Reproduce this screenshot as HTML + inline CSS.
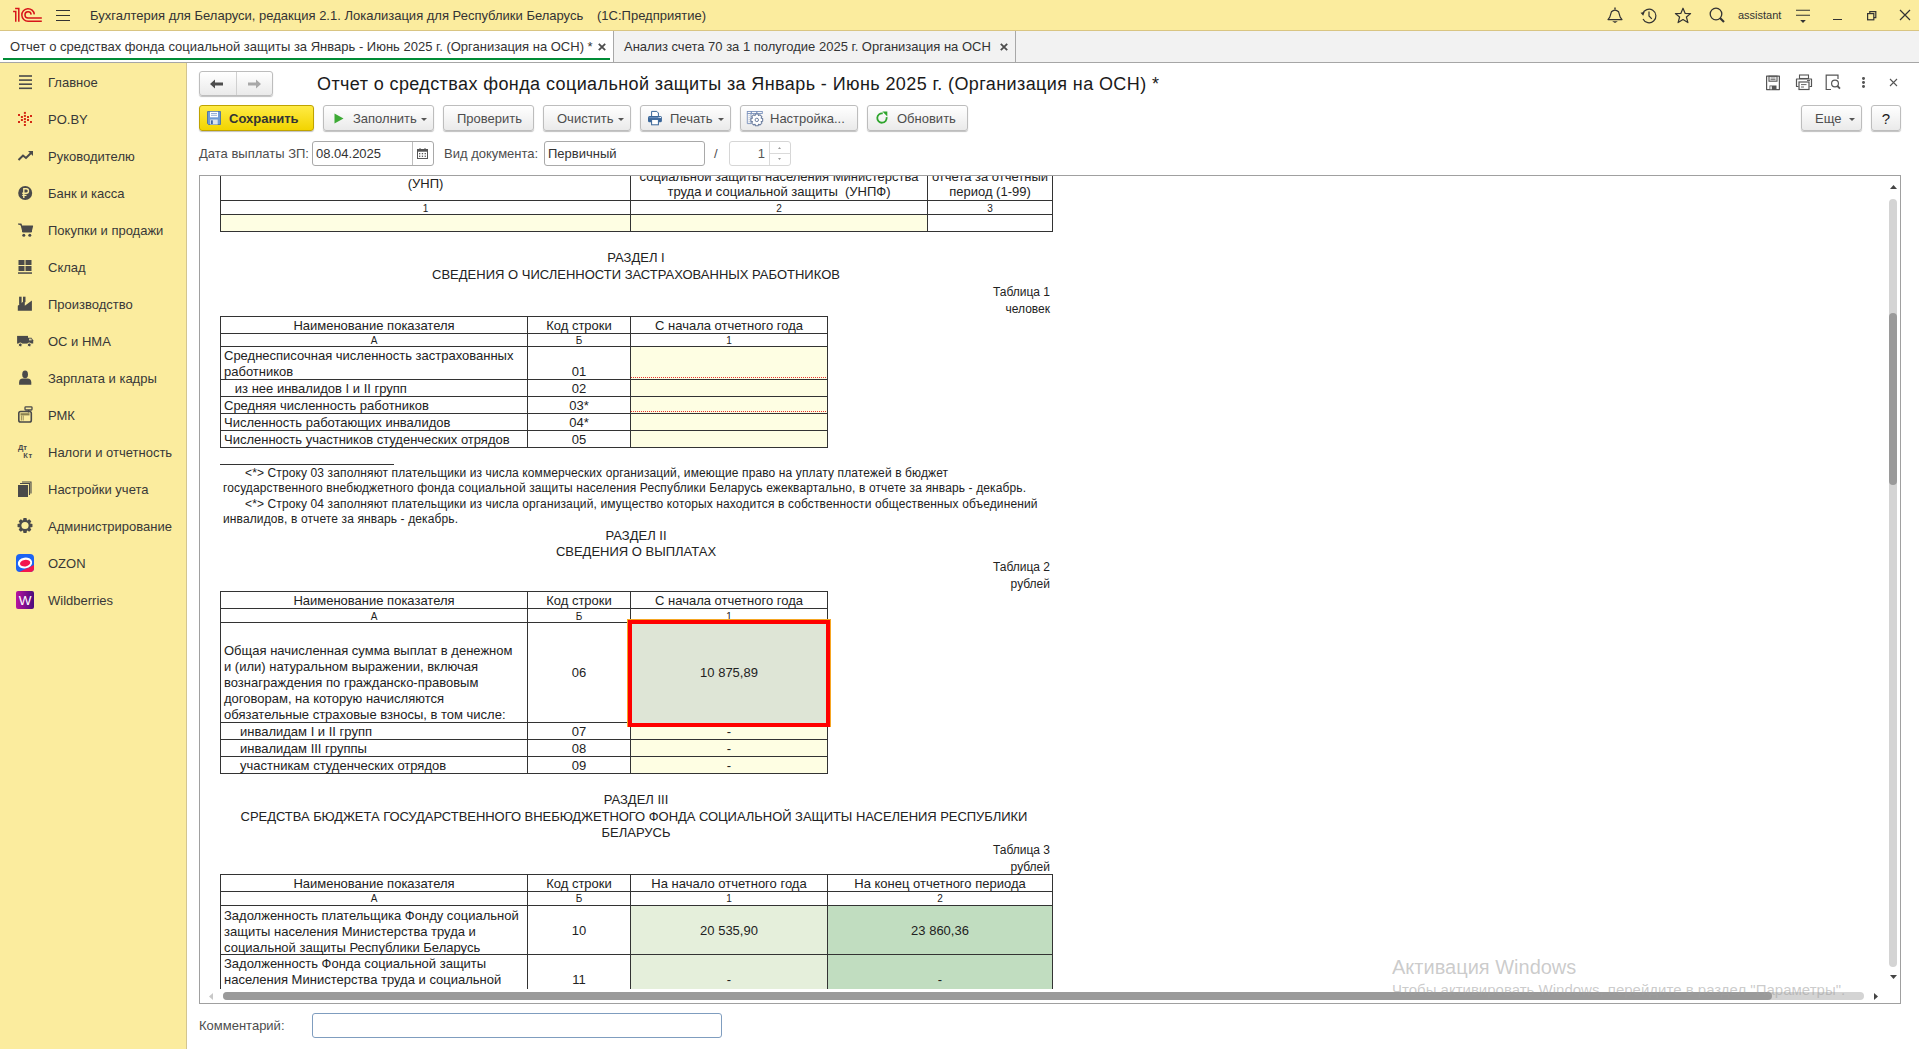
<!DOCTYPE html>
<html><head><meta charset="utf-8">
<style>
html,body{margin:0;padding:0;width:1919px;height:1049px;overflow:hidden;background:#fff;font-family:'Liberation Sans',sans-serif;}
.a{position:absolute;}
.t{position:absolute;white-space:nowrap;}
svg{position:absolute;overflow:visible;}
.btn{position:absolute;box-sizing:border-box;height:26px;border:1px solid #bdbdbd;border-radius:3px;background:linear-gradient(#ffffff,#eaeaea);box-shadow:0 1px 1px rgba(0,0,0,0.25);}
.inp{position:absolute;box-sizing:border-box;border:1px solid #bdbdbd;border-radius:3px;background:#fff;}
</style></head><body>

<div class="a" style="left:0px;top:0px;width:1919px;height:30px;background:#FBEC9E"></div>
<div class="a" style="left:0px;top:30px;width:1919px;height:1px;background:#D9C582"></div>
<svg style="left:10px;top:4px" width="36" height="22" viewBox="0 0 36 22">
<g fill="none" stroke="#D7141A" stroke-width="1.5">
<path d="M3.1 7.6 H5.75 V17.8"/>
<path d="M5.1 4.6 H8.8 V17.8"/>
<path d="M24.3 10.3 A6.25 6.25 0 1 0 18.1 17.2 H31.8"/>
<path d="M21.15 10.6 A3.1 3.1 0 1 0 18 14 H31.8"/>
</g></svg>
<div class="a" style="left:56px;top:10px;width:14px;height:1.4px;background:#333"></div>
<div class="a" style="left:56px;top:15px;width:14px;height:1.4px;background:#333"></div>
<div class="a" style="left:56px;top:20px;width:14px;height:1.4px;background:#333"></div>
<div class="t" style="left:90px;top:8px;font-size:13px;line-height:15px;color:#333;">Бухгалтерия для Беларуси, редакция 2.1. Локализация для Республики Беларусь</div>
<div class="t" style="left:597px;top:8px;font-size:13px;line-height:15px;color:#333;">(1С:Предприятие)</div>
<svg style="left:1606px;top:7px" width="18" height="18" viewBox="0 0 18 18">
<path d="M2 12.6 H16 L14.2 10.2 L12.6 4.8 Q9 1.4 5.4 4.8 L3.8 10.2 Z" fill="none" stroke="#333" stroke-width="1.2" stroke-linejoin="round"/>
<path d="M9 0.6 L9 2.4" stroke="#333" stroke-width="1.4"/>
<path d="M6.2 14.2 H11.8 L9 16 Z" fill="#333"/>
</svg>
<svg style="left:1640px;top:7px" width="18" height="18" viewBox="0 0 18 18">
<path d="M2.6 7 A6.8 6.8 0 1 1 3 12" fill="none" stroke="#333" stroke-width="1.2"/>
<path d="M0.5 5.8 L4.6 5 L3.2 8.8 Z" fill="#333"/>
<path d="M9 4.5 L9 9 L11.8 11.8" fill="none" stroke="#333" stroke-width="1.2"/>
</svg>
<svg style="left:1674px;top:7px" width="18" height="18" viewBox="0 0 18 18">
<path d="M9 1.2 L11.2 6.4 L16.6 6.6 L12.4 10 L13.9 15.6 L9 12.5 L4.1 15.6 L5.6 10 L1.4 6.6 L6.8 6.4 Z" fill="none" stroke="#333" stroke-width="1.2" stroke-linejoin="round"/>
</svg>
<svg style="left:1709px;top:7px" width="18" height="18" viewBox="0 0 18 18">
<circle cx="7" cy="7" r="5.8" fill="none" stroke="#333" stroke-width="1.3"/>
<path d="M11 11 L15 15" stroke="#333" stroke-width="2.2"/>
</svg>
<div class="t" style="left:1738px;top:8px;font-size:11px;line-height:15px;color:#333;">assistant</div>
<svg style="left:1796px;top:8px" width="16" height="16" viewBox="0 0 16 16">
<path d="M0 2.3 H14 M0 7.3 H14" stroke="#333" stroke-width="1.1"/>
<path d="M4.2 12 L9.8 12 L7 15 Z" fill="#333"/>
</svg>
<div class="a" style="left:1833px;top:18.5px;width:9px;height:1.4px;background:#333"></div>
<svg style="left:1866px;top:10px" width="12" height="12" viewBox="0 0 12 12">
<rect x="1.6" y="3.6" width="6.2" height="6.2" fill="none" stroke="#333" stroke-width="1.2"/>
<path d="M3.8 3.6 V1.6 H9.8 V7.6 H7.8" fill="none" stroke="#333" stroke-width="1.2"/>
</svg>
<svg style="left:1899px;top:9px" width="12" height="12" viewBox="0 0 12 12">
<path d="M1 1 L11 11 M11 1 L1 11" stroke="#333" stroke-width="1.2"/>
</svg>
<div class="a" style="left:0px;top:31px;width:1919px;height:31px;background:#F2F2F2"></div>
<div class="a" style="left:0px;top:31px;width:613px;height:31px;background:#FFFFFF"></div>
<div class="a" style="left:3px;top:58px;width:607px;height:2px;background:#008C36"></div>
<div class="a" style="left:613px;top:31px;width:1px;height:31px;background:#A8A8A8"></div>
<div class="a" style="left:1015px;top:31px;width:1px;height:31px;background:#A8A8A8"></div>
<div class="a" style="left:0px;top:62px;width:1919px;height:1px;background:#A6A6A6"></div>
<div class="t" style="left:10px;top:39px;font-size:13px;line-height:15px;color:#333;">Отчет о средствах фонда социальной защиты за Январь - Июнь 2025 г. (Организация на ОСН) *</div>
<div class="t" style="left:624px;top:39px;font-size:13px;line-height:15px;color:#333;">Анализ счета 70 за 1 полугодие 2025 г. Организация на ОСН</div>
<svg style="left:597.5px;top:43px" width="8" height="8" viewBox="0 0 8 8"><path d="M0.8 0.8 L7.2 7.2 M7.2 0.8 L0.8 7.2" stroke="#4d4d4d" stroke-width="1.8"/></svg>
<svg style="left:999.5px;top:43px" width="8" height="8" viewBox="0 0 8 8"><path d="M0.8 0.8 L7.2 7.2 M7.2 0.8 L0.8 7.2" stroke="#4d4d4d" stroke-width="1.8"/></svg>
<div class="a" style="left:0px;top:63px;width:186px;height:986px;background:#FBEC9E"></div>
<div class="a" style="left:186px;top:63px;width:1px;height:986px;background:#D3C590"></div>
<div class="t" style="left:48px;top:75px;font-size:13px;line-height:15px;color:#383838;">Главное</div>
<div class="t" style="left:48px;top:112px;font-size:13px;line-height:15px;color:#383838;">PO.BY</div>
<div class="t" style="left:48px;top:149px;font-size:13px;line-height:15px;color:#383838;">Руководителю</div>
<div class="t" style="left:48px;top:186px;font-size:13px;line-height:15px;color:#383838;">Банк и касса</div>
<div class="t" style="left:48px;top:223px;font-size:13px;line-height:15px;color:#383838;">Покупки и продажи</div>
<div class="t" style="left:48px;top:260px;font-size:13px;line-height:15px;color:#383838;">Склад</div>
<div class="t" style="left:48px;top:297px;font-size:13px;line-height:15px;color:#383838;">Производство</div>
<div class="t" style="left:48px;top:334px;font-size:13px;line-height:15px;color:#383838;">ОС и НМА</div>
<div class="t" style="left:48px;top:371px;font-size:13px;line-height:15px;color:#383838;">Зарплата и кадры</div>
<div class="t" style="left:48px;top:408px;font-size:13px;line-height:15px;color:#383838;">РМК</div>
<div class="t" style="left:48px;top:445px;font-size:13px;line-height:15px;color:#383838;">Налоги и отчетность</div>
<div class="t" style="left:48px;top:482px;font-size:13px;line-height:15px;color:#383838;">Настройки учета</div>
<div class="t" style="left:48px;top:519px;font-size:13px;line-height:15px;color:#383838;">Администрирование</div>
<div class="t" style="left:48px;top:556px;font-size:13px;line-height:15px;color:#383838;">OZON</div>
<div class="t" style="left:48px;top:593px;font-size:13px;line-height:15px;color:#383838;">Wildberries</div>
<svg style="left:17px;top:73px" width="18" height="18" viewBox="0 0 18 18"><rect x="2" y="2.2" width="13" height="1.6" fill="#4a4a4a"/><rect x="2" y="6.3" width="13" height="1.6" fill="#4a4a4a"/><rect x="2" y="10.4" width="13" height="1.6" fill="#4a4a4a"/><rect x="2" y="14.5" width="13" height="1.6" fill="#4a4a4a"/></svg>
<svg style="left:17px;top:110px" width="18" height="18" viewBox="0 0 18 18"><rect x="6.9" y="1.9" width="2" height="2" fill="#D42A14"/><rect x="6.9" y="4.9" width="2" height="2" fill="#D42A14"/><rect x="6.9" y="8" width="2" height="2" fill="#D42A14"/><rect x="6.9" y="10.9" width="2" height="2" fill="#D42A14"/><rect x="6.9" y="14" width="2" height="2" fill="#D42A14"/><rect x="1" y="4" width="2" height="2" fill="#D42A14"/><rect x="1" y="11" width="2" height="2" fill="#D42A14"/><rect x="3.9" y="6" width="2" height="2" fill="#D42A14"/><rect x="3.9" y="9" width="2" height="2" fill="#D42A14"/><rect x="10" y="6" width="2" height="2" fill="#D42A14"/><rect x="10" y="9" width="2" height="2" fill="#D42A14"/><rect x="13" y="5" width="2" height="2" fill="#D42A14"/><rect x="13" y="11" width="2" height="2" fill="#D42A14"/></svg>
<svg style="left:17px;top:147px" width="18" height="18" viewBox="0 0 18 18"><path d="M1.5 13 L6 8.5 L9 11 L14.5 5.5" fill="none" stroke="#4a4a4a" stroke-width="2"/><path d="M11 4 L16 4 L16 9 Z" fill="#4a4a4a"/></svg>
<svg style="left:17px;top:184px" width="18" height="18" viewBox="0 0 18 18"><circle cx="8.2" cy="9" r="7" fill="#4a4a4a"/><path d="M6.8 14 V4.8 H9.3 A2.2 2.2 0 0 1 9.3 9.2 H5.2 M5.2 11.4 H9.5" fill="none" stroke="#FBEC9E" stroke-width="1.4"/></svg>
<svg style="left:17px;top:221px" width="18" height="18" viewBox="0 0 18 18"><path d="M1 3 H4 L6 11 H14 L15.5 5 H4.8" fill="#4a4a4a" stroke="#4a4a4a" stroke-width="1.2" stroke-linejoin="round"/><rect x="5" y="5" width="10" height="6" fill="#4a4a4a"/><circle cx="6.8" cy="14.2" r="1.5" fill="#4a4a4a"/><circle cx="12.8" cy="14.2" r="1.5" fill="#4a4a4a"/></svg>
<svg style="left:17px;top:258px" width="18" height="18" viewBox="0 0 18 18"><rect x="1.5" y="2" width="6" height="5" fill="#4a4a4a"/><rect x="8.5" y="2" width="6" height="5" fill="#4a4a4a"/><rect x="1.5" y="8" width="6" height="5" fill="#4a4a4a"/><rect x="8.5" y="8" width="6" height="5" fill="#4a4a4a"/><rect x="1" y="14.3" width="14" height="1.5" fill="#4a4a4a"/></svg>
<svg style="left:17px;top:295px" width="18" height="18" viewBox="0 0 18 18"><path d="M0.8 15.8 V10.7 L7.8 5.6 V10.7 L14.9 5.6 V15.8 Z" fill="#4a4a4a"/><rect x="2.1" y="1.7" width="2.5" height="8" fill="#4a4a4a"/><rect x="6" y="1.7" width="2.5" height="5.5" fill="#4a4a4a"/></svg>
<svg style="left:17px;top:332px" width="18" height="18" viewBox="0 0 18 18"><rect x="0.1" y="3.9" width="10.9" height="7.7" fill="#4a4a4a"/><path d="M11 5.8 H14.5 L16.2 8.2 V11.6 H11 Z" fill="#4a4a4a"/><rect x="12" y="6.6" width="2.6" height="1.8" fill="#D8CFA0"/><circle cx="3.3" cy="12.9" r="1.9" fill="#4a4a4a" stroke="#FBEC9E" stroke-width="1"/><circle cx="12.3" cy="12.9" r="1.9" fill="#4a4a4a" stroke="#FBEC9E" stroke-width="1"/></svg>
<svg style="left:17px;top:369px" width="18" height="18" viewBox="0 0 18 18"><ellipse cx="8.1" cy="5.4" rx="2.9" ry="3.8" fill="#4a4a4a"/><path d="M2.1 15.7 V13.5 Q2.1 9.6 6 9.6 H10.4 Q14.3 9.6 14.3 13.5 V15.7 Z" fill="#4a4a4a"/></svg>
<svg style="left:17px;top:406px" width="18" height="18" viewBox="0 0 18 18"><rect x="1.8" y="5.5" width="12.5" height="10.5" rx="1.8" fill="none" stroke="#4a4a4a" stroke-width="1.6"/><rect x="8" y="0.8" width="7" height="3.2" rx="0.8" fill="none" stroke="#4a4a4a" stroke-width="1.3"/><path d="M11.5 4 V6.5" stroke="#4a4a4a" stroke-width="1.3"/><rect x="3.5" y="7.2" width="9" height="2.2" fill="#8a8150"/><path d="M4.4 9.5 V14.5 M6.2 9.5 V14.5" stroke="#8a8150" stroke-width="0.9"/></svg>
<svg style="left:17px;top:443px" width="18" height="18" viewBox="0 0 18 18"><text x="1" y="7.3" font-size="7.5" font-weight="bold" fill="#4a4a4a" font-family="Liberation Sans" textLength="9">Дт</text><text x="6.3" y="15.2" font-size="7.5" font-weight="bold" fill="#4a4a4a" font-family="Liberation Sans" textLength="9">Кт</text></svg>
<svg style="left:17px;top:480px" width="18" height="18" viewBox="0 0 18 18"><rect x="1" y="5" width="10" height="12" fill="#4a4a4a"/><path d="M3 3.5 H12.5 V15 M5 2 H14 V13.5" fill="none" stroke="#4a4a4a" stroke-width="1.1"/></svg>
<svg style="left:17px;top:517px" width="18" height="18" viewBox="0 0 18 18"><path d="M15.45 6.99 L15.45 10.01 L13.24 10.47 L13.10 10.81 L14.33 12.70 L12.20 14.83 L10.31 13.60 L9.97 13.74 L9.51 15.95 L6.49 15.95 L6.03 13.74 L5.69 13.60 L3.80 14.83 L1.67 12.70 L2.90 10.81 L2.76 10.47 L0.55 10.01 L0.55 6.99 L2.76 6.53 L2.90 6.19 L1.67 4.30 L3.80 2.17 L5.69 3.40 L6.03 3.26 L6.49 1.05 L9.51 1.05 L9.97 3.26 L10.31 3.40 L12.20 2.17 L14.33 4.30 L13.10 6.19 L13.24 6.53 Z" fill="#4a4a4a"/><circle cx="8" cy="8.5" r="3.6" fill="#FBEC9E"/></svg>
<svg style="left:16px;top:554px" width="18" height="18" viewBox="0 0 18 18"><defs><clipPath id="oz"><rect x="0" y="0" width="18" height="18" rx="4"/></clipPath></defs><g clip-path="url(#oz)"><rect x="0" y="0" width="18" height="18" fill="#1C63F2"/><path d="M3.1 18 L18 10.9 V18 Z" fill="#F3154F"/></g><ellipse cx="9" cy="9" rx="7.2" ry="5.4" transform="rotate(-10 9 9)" fill="#fff"/><ellipse cx="9.1" cy="9.2" rx="5.2" ry="3.3" transform="rotate(-10 9 9)" fill="#F3154F"/></svg>
<svg style="left:16px;top:591px" width="18" height="18" viewBox="0 0 18 18"><defs><linearGradient id="wbg" x1="0" y1="0" x2="1" y2="0"><stop offset="0" stop-color="#B8139F"/><stop offset="1" stop-color="#4A0C7C"/></linearGradient></defs><rect x="0" y="0" width="18" height="18" rx="2" fill="url(#wbg)"/><text x="9" y="13.8" font-size="13.5" text-anchor="middle" fill="#fff" font-family="Liberation Sans">W</text></svg>
<div class="btn" style="left:199px;top:71px;width:74px;height:25px;"></div>
<div class="a" style="left:236px;top:72px;width:1px;height:23px;background:#d0d0d0"></div>
<svg style="left:209px;top:78px" width="16" height="12" viewBox="0 0 16 12">
<path d="M1 6 L6 1.5 V4.6 H14 V7.4 H6 V10.5 Z" fill="#4d4d4d"/></svg>
<svg style="left:246px;top:78px" width="16" height="12" viewBox="0 0 16 12">
<path d="M15 6 L10 1.5 V4.6 H2 V7.4 H10 V10.5 Z" fill="#a8a8a8"/></svg>
<div class="t" style="left:317px;top:74px;font-size:18px;line-height:20px;color:#1a1a1a;letter-spacing:0.4px;">Отчет о средствах фонда социальной защиты за Январь - Июнь 2025 г. (Организация на ОСН) *</div>
<svg style="left:1765px;top:75px" width="16" height="16" viewBox="0 0 16 16">
<path d="M1.6 1.2 H14.4 V14.6 H1.6 Z" fill="none" stroke="#555" stroke-width="1.2" stroke-linejoin="round"/>
<rect x="4" y="1.2" width="8" height="5" fill="none" stroke="#555" stroke-width="1.1"/>
<path d="M5.5 3 H10.5 M5.5 4.6 H10.5" stroke="#555" stroke-width="0.8"/>
<rect x="4.5" y="10.5" width="7" height="4" fill="#555"/><rect x="5.3" y="11.3" width="1.5" height="3" fill="#fff"/>
</svg>
<svg style="left:1795px;top:74px" width="18" height="17" viewBox="0 0 18 17">
<rect x="4.5" y="1" width="9" height="3.5" fill="none" stroke="#555" stroke-width="1.1"/>
<path d="M3.5 12.5 H1.5 V5 H16.5 V12.5 H14.5" fill="none" stroke="#555" stroke-width="1.2" stroke-linejoin="round"/>
<rect x="4" y="8" width="10" height="7.5" fill="#fff" stroke="#555" stroke-width="1.2"/>
<path d="M6 10.6 H11.5 M6 13 H9" stroke="#555" stroke-width="0.9"/>
<path d="M12 6.5 H15" stroke="#555" stroke-width="0.9"/>
</svg>
<svg style="left:1825px;top:74px" width="18" height="17" viewBox="0 0 18 17">
<path d="M6 15.5 H1.2 V1.2 H13 V5" fill="none" stroke="#555" stroke-width="1.2"/>
<circle cx="10" cy="9.5" r="3.4" fill="none" stroke="#555" stroke-width="1.2"/>
<path d="M12.4 12 L15 14.6" stroke="#555" stroke-width="1.8"/>
</svg>
<div class="a" style="left:1862px;top:76.89999999999999px;width:2.8px;height:2.8px;border-radius:50%;background:#555"></div>
<div class="a" style="left:1862px;top:81.0px;width:2.8px;height:2.8px;border-radius:50%;background:#555"></div>
<div class="a" style="left:1862px;top:85.19999999999999px;width:2.8px;height:2.8px;border-radius:50%;background:#555"></div>
<svg style="left:1889px;top:78px" width="9" height="9" viewBox="0 0 9 9">
<path d="M1 1 L8 8 M8 1 L1 8" stroke="#555" stroke-width="1.1"/></svg>
<div class="btn" style="left:199px;top:105px;width:115px;height:25.5px;border-color:#BFA300;background:linear-gradient(#FFEB45,#F2D400);"></div>
<svg style="left:207px;top:111px" width="14" height="14" viewBox="0 0 14 14">
<path d="M0.5 0.5 H13.5 V13.5 H1.5 L0.5 12.5 Z" fill="#6F9AD4" stroke="#3F67A8" stroke-width="0.8"/>
<rect x="3" y="0.8" width="8" height="5.5" fill="#fff"/>
<path d="M4 2.5 H10 M4 4.3 H10" stroke="#7A9BCB" stroke-width="0.8"/>
<rect x="3.2" y="8.5" width="7.5" height="5" fill="#DCE4EE"/><rect x="4" y="9.3" width="1.8" height="3.8" fill="#3F67A8"/>
</svg>
<div class="t" style="left:229px;top:111px;font-size:13px;line-height:15px;color:#333;font-weight:bold;">Сохранить</div>
<div class="btn" style="left:323px;top:105px;width:111px;height:25.5px;"></div>
<div class="t" style="left:353px;top:111px;font-size:13px;line-height:15px;color:#4d4d4d;">Заполнить</div>
<svg style="left:421px;top:118px" width="6" height="3" viewBox="0 0 6 3"><path d="M0 0 H6 L3 3 Z" fill="#555"/></svg>
<svg style="left:334px;top:113px" width="10" height="11" viewBox="0 0 10 11"><path d="M0.5 0.5 L9.5 5.5 L0.5 10.5 Z" fill="#3DAA35"/></svg>
<div class="btn" style="left:443px;top:105px;width:91px;height:25.5px;"></div>
<div class="t" style="left:457px;top:111px;font-size:13px;line-height:15px;color:#4d4d4d;">Проверить</div>
<div class="btn" style="left:543px;top:105px;width:88px;height:25.5px;"></div>
<div class="t" style="left:557px;top:111px;font-size:13px;line-height:15px;color:#4d4d4d;">Очистить</div>
<svg style="left:618px;top:118px" width="6" height="3" viewBox="0 0 6 3"><path d="M0 0 H6 L3 3 Z" fill="#555"/></svg>
<div class="btn" style="left:640px;top:105px;width:91px;height:25.5px;"></div>
<div class="t" style="left:670px;top:111px;font-size:13px;line-height:15px;color:#4d4d4d;">Печать</div>
<svg style="left:718px;top:118px" width="6" height="3" viewBox="0 0 6 3"><path d="M0 0 H6 L3 3 Z" fill="#555"/></svg>
<svg style="left:647px;top:110px" width="16" height="16" viewBox="0 0 16 16">
<path d="M4.6 6.2 V1.4 H9.8 L11.4 3 V6.2" fill="#fff" stroke="#3A6699" stroke-width="1"/>
<rect x="1" y="6.1" width="13.9" height="6.2" rx="1.6" fill="#3A6699"/>
<rect x="2.2" y="7.2" width="11.5" height="1" fill="#6F93C0"/>
<rect x="11.6" y="6.9" width="1" height="1" fill="#fff"/><rect x="13" y="6.9" width="1" height="1" fill="#fff"/>
<rect x="4.6" y="9.4" width="6.8" height="5.4" fill="#fff" stroke="#3A6699" stroke-width="1"/>
</svg>
<div class="btn" style="left:740px;top:105px;width:118px;height:25.5px;"></div>
<div class="t" style="left:770px;top:111px;font-size:13px;line-height:15px;color:#4d4d4d;">Настройка...</div>
<svg style="left:746px;top:110px" width="18" height="17" viewBox="0 0 18 17">
<rect x="1.3" y="1.5" width="4" height="2" fill="none" stroke="#7C93BD" stroke-width="0.9"/>
<rect x="5.3" y="1.5" width="5.5" height="2" fill="none" stroke="#7C93BD" stroke-width="0.9"/>
<rect x="10.8" y="1.5" width="5.5" height="2" fill="none" stroke="#7C93BD" stroke-width="0.9"/>
<path d="M1.3 3.5 V13.6 H5 M5 3.5 V13.6" fill="none" stroke="#7C93BD" stroke-width="0.9"/>
<path d="M3.2 5 V12.5" stroke="#9FB0CF" stroke-width="0.7" stroke-dasharray="1 1"/>
<path d="M16.66 8.59 L16.66 11.21 L15.16 11.64 L15.12 11.75 L15.87 13.11 L14.01 14.97 L12.65 14.22 L12.54 14.26 L12.11 15.76 L9.49 15.76 L9.06 14.26 L8.95 14.22 L7.59 14.97 L5.73 13.11 L6.48 11.75 L6.44 11.64 L4.94 11.21 L4.94 8.59 L6.44 8.16 L6.48 8.05 L5.73 6.69 L7.59 4.83 L8.95 5.58 L9.06 5.54 L9.49 4.04 L12.11 4.04 L12.54 5.54 L12.65 5.58 L14.01 4.83 L15.87 6.69 L15.12 8.05 L15.16 8.16 Z" fill="#fff" stroke="#6D7FA0" stroke-width="1.1" stroke-linejoin="round"/>
<circle cx="10.8" cy="9.9" r="1.7" fill="none" stroke="#6D7FA0" stroke-width="1"/>
</svg>
<div class="btn" style="left:867px;top:105px;width:101px;height:25.5px;"></div>
<div class="t" style="left:897px;top:111px;font-size:13px;line-height:15px;color:#4d4d4d;">Обновить</div>
<svg style="left:875px;top:111px" width="14" height="14" viewBox="0 0 14 14">
<path d="M7.8 2.4 A4.7 4.7 0 1 0 11.6 6.2" fill="none" stroke="#2FA52E" stroke-width="1.8"/>
<path d="M7.4 0.5 L12.3 0.5 L12.3 5.4 Z" fill="#2FA52E"/>
</svg>
<div class="btn" style="left:1801px;top:105px;width:61px;height:25.5px;"></div>
<div class="t" style="left:1815px;top:111px;font-size:13px;line-height:15px;color:#4d4d4d;">Еще</div>
<svg style="left:1849px;top:118px" width="6" height="3" viewBox="0 0 6 3"><path d="M0 0 H6 L3 3 Z" fill="#555"/></svg>
<div class="btn" style="left:1871px;top:105px;width:30px;height:25.5px;"></div>
<div class="t" style="left:1876.0px;width:20px;text-align:center;top:110px;font-size:15px;line-height:17px;color:#1a1a1a;">?</div>
<div class="t" style="left:199px;top:146px;font-size:13px;line-height:15px;color:#4d4d4d;">Дата выплаты ЗП:</div>
<div class="inp" style="left:312px;top:141px;width:122px;height:25px;border-color:#A9A9A9"></div>
<div class="a" style="left:412px;top:142px;width:1px;height:23px;background:#bdbdbd"></div>
<div class="t" style="left:316px;top:146px;font-size:13px;line-height:15px;color:#333;">08.04.2025</div>
<svg style="left:416px;top:147px" width="13" height="13" viewBox="0 0 13 13">
<rect x="1.5" y="2.5" width="10" height="9" fill="#fff" stroke="#555" stroke-width="1"/>
<rect x="1.5" y="2.5" width="10" height="2.2" fill="#555"/>
<path d="M4 1 V3 M9 1 V3" stroke="#555" stroke-width="1"/>
<g fill="#555"><rect x="3" y="6" width="1.3" height="1.3"/><rect x="5.8" y="6" width="1.3" height="1.3"/><rect x="8.6" y="6" width="1.3" height="1.3"/><rect x="3" y="8.6" width="1.3" height="1.3"/><rect x="5.8" y="8.6" width="1.3" height="1.3"/><rect x="8.6" y="8.6" width="1.3" height="1.3"/></g>
</svg>
<div class="t" style="left:444px;top:146px;font-size:13px;line-height:15px;color:#4d4d4d;">Вид документа:</div>
<div class="inp" style="left:544px;top:141px;width:161px;height:25px;border-color:#A9A9A9"></div>
<div class="t" style="left:548px;top:146px;font-size:13px;line-height:15px;color:#333;">Первичный</div>
<div class="t" style="left:714px;top:146px;font-size:13px;line-height:15px;color:#4d4d4d;">/</div>
<div class="inp" style="left:729px;top:141px;width:62px;height:25px;border-color:#D6D6D6"></div>
<div class="a" style="left:769px;top:142px;width:1px;height:23px;background:#DADADA"></div>
<div class="a" style="left:770px;top:153px;width:21px;height:1px;background:#DADADA"></div>
<div class="t" style="left:745px;width:20px;text-align:right;top:146px;font-size:13px;line-height:15px;color:#555;">1</div>
<svg style="left:778px;top:147px" width="3" height="2" viewBox="0 0 3 2"><path d="M0 2 L1.5 0 L3 2 Z" fill="#999"/></svg>
<svg style="left:778px;top:158px" width="3" height="2" viewBox="0 0 3 2"><path d="M0 0 L1.5 2 L3 0 Z" fill="#999"/></svg>
<div class="t" style="left:199px;top:1018px;font-size:13px;line-height:15px;color:#4d4d4d;">Комментарий:</div>
<div class="inp" style="left:312px;top:1013px;width:410px;height:25px;border-color:#7F9DBF;border-radius:3px"></div>
<div class="a" style="left:199px;top:175px;width:1702px;height:829px;box-sizing:border-box;border:1px solid #A0A0A0;background:#fff"></div>
<div class="a" style="left:200px;top:176px;width:1689px;height:813px;overflow:hidden"><div class="a" style="left:-200px;top:-176px;width:1919px;height:1049px">
<div class="a" style="left:221px;top:215px;width:409px;height:16px;background:#FEFEE3"></div>
<div class="a" style="left:631px;top:215px;width:296px;height:16px;background:#FEFEE3"></div>
<div class="a" style="left:220px;top:200px;width:833px;height:1px;background:#333"></div>
<div class="a" style="left:220px;top:214px;width:833px;height:1px;background:#333"></div>
<div class="a" style="left:220px;top:231px;width:833px;height:1px;background:#333"></div>
<div class="a" style="left:220px;top:150px;width:1px;height:82px;background:#333"></div>
<div class="a" style="left:630px;top:150px;width:1px;height:82px;background:#333"></div>
<div class="a" style="left:927px;top:150px;width:1px;height:82px;background:#333"></div>
<div class="a" style="left:1052px;top:150px;width:1px;height:82px;background:#333"></div>
<div class="t" style="left:225.5px;width:400px;text-align:center;top:176px;font-size:13px;line-height:15px;color:#222;">(УНП)</div>
<div class="t" style="left:634.0px;width:290px;text-align:center;top:169px;font-size:13px;line-height:15px;color:#222;">социальной защиты населения Министерства</div>
<div class="t" style="left:634.0px;width:290px;text-align:center;top:184px;font-size:13px;line-height:15px;color:#222;">труда и социальной защиты&nbsp; (УНПФ)</div>
<div class="t" style="left:930.0px;width:120px;text-align:center;top:169px;font-size:13px;line-height:15px;color:#222;">отчета за отчетный</div>
<div class="t" style="left:930.0px;width:120px;text-align:center;top:184px;font-size:13px;line-height:15px;color:#222;">период (1-99)</div>
<div class="t" style="left:395.5px;width:60px;text-align:center;top:203px;font-size:10px;line-height:11px;color:#222;">1</div>
<div class="t" style="left:749.0px;width:60px;text-align:center;top:203px;font-size:10px;line-height:11px;color:#222;">2</div>
<div class="t" style="left:960.0px;width:60px;text-align:center;top:203px;font-size:10px;line-height:11px;color:#222;">3</div>
<div class="t" style="left:336.0px;width:600px;text-align:center;top:250px;font-size:13px;line-height:15px;color:#222;">РАЗДЕЛ I</div>
<div class="t" style="left:286.0px;width:700px;text-align:center;top:267px;font-size:13px;line-height:15px;color:#222;">СВЕДЕНИЯ О ЧИСЛЕННОСТИ ЗАСТРАХОВАННЫХ РАБОТНИКОВ</div>
<div class="t" style="left:850px;width:200px;text-align:right;top:285px;font-size:12px;line-height:15px;color:#222;">Таблица 1</div>
<div class="t" style="left:850px;width:200px;text-align:right;top:302px;font-size:12px;line-height:15px;color:#222;">человек</div>
<div class="a" style="left:631px;top:347px;width:196px;height:32px;background:#FEFEE3"></div>
<div class="a" style="left:631px;top:380px;width:196px;height:16px;background:#FEFEE3"></div>
<div class="a" style="left:631px;top:397px;width:196px;height:16px;background:#FEFEE3"></div>
<div class="a" style="left:631px;top:414px;width:196px;height:16px;background:#FEFEE3"></div>
<div class="a" style="left:631px;top:431px;width:196px;height:16px;background:#FEFEE3"></div>
<div class="a" style="left:220px;top:316px;width:608px;height:1px;background:#333"></div>
<div class="a" style="left:220px;top:333px;width:608px;height:1px;background:#333"></div>
<div class="a" style="left:220px;top:346px;width:608px;height:1px;background:#333"></div>
<div class="a" style="left:220px;top:379px;width:608px;height:1px;background:#333"></div>
<div class="a" style="left:220px;top:396px;width:608px;height:1px;background:#333"></div>
<div class="a" style="left:220px;top:413px;width:608px;height:1px;background:#333"></div>
<div class="a" style="left:220px;top:430px;width:608px;height:1px;background:#333"></div>
<div class="a" style="left:220px;top:447px;width:608px;height:1px;background:#333"></div>
<div class="a" style="left:220px;top:316px;width:1px;height:132px;background:#333"></div>
<div class="a" style="left:527px;top:316px;width:1px;height:132px;background:#333"></div>
<div class="a" style="left:630px;top:316px;width:1px;height:132px;background:#333"></div>
<div class="a" style="left:827px;top:316px;width:1px;height:132px;background:#333"></div>
<div class="a" style="left:631px;top:377px;width:196px;height:1px;background:repeating-linear-gradient(90deg,#E8332E 0 1px,transparent 1px 2px)"></div>
<div class="a" style="left:631px;top:411px;width:196px;height:1px;background:repeating-linear-gradient(90deg,#E8332E 0 1px,transparent 1px 2px)"></div>
<div class="t" style="left:220.5px;width:307px;text-align:center;top:318px;font-size:13px;line-height:15px;color:#222;">Наименование показателя</div>
<div class="t" style="left:527.5px;width:103px;text-align:center;top:318px;font-size:13px;line-height:15px;color:#222;">Код строки</div>
<div class="t" style="left:630.5px;width:197px;text-align:center;top:318px;font-size:13px;line-height:15px;color:#222;">С начала отчетного года</div>
<div class="t" style="left:344.0px;width:60px;text-align:center;top:335px;font-size:10px;line-height:11px;color:#222;">А</div>
<div class="t" style="left:549.0px;width:60px;text-align:center;top:335px;font-size:10px;line-height:11px;color:#222;">Б</div>
<div class="t" style="left:699.0px;width:60px;text-align:center;top:335px;font-size:10px;line-height:11px;color:#222;">1</div>
<div class="t" style="left:224px;top:348px;font-size:13px;line-height:15px;color:#222;">Среднесписочная численность застрахованных</div>
<div class="t" style="left:224px;top:364px;font-size:13px;line-height:15px;color:#222;">работников</div>
<div class="t" style="left:529.0px;width:100px;text-align:center;top:364px;font-size:13px;line-height:15px;color:#222;">01</div>
<div class="t" style="left:224px;top:381px;font-size:13px;line-height:15px;color:#222;">&nbsp;&nbsp;&nbsp;из нее инвалидов I и II групп</div>
<div class="t" style="left:529.0px;width:100px;text-align:center;top:381px;font-size:13px;line-height:15px;color:#222;">02</div>
<div class="t" style="left:224px;top:398px;font-size:13px;line-height:15px;color:#222;">Средняя численность работников</div>
<div class="t" style="left:529.0px;width:100px;text-align:center;top:398px;font-size:13px;line-height:15px;color:#222;">03*</div>
<div class="t" style="left:224px;top:415px;font-size:13px;line-height:15px;color:#222;">Численность работающих инвалидов</div>
<div class="t" style="left:529.0px;width:100px;text-align:center;top:415px;font-size:13px;line-height:15px;color:#222;">04*</div>
<div class="t" style="left:224px;top:432px;font-size:13px;line-height:15px;color:#222;">Численность участников студенческих отрядов</div>
<div class="t" style="left:529.0px;width:100px;text-align:center;top:432px;font-size:13px;line-height:15px;color:#222;">05</div>
<div class="a" style="left:220px;top:464px;width:174px;height:1px;background:#333"></div>
<div class="t" style="left:245px;top:466px;font-size:12px;line-height:15px;color:#222;letter-spacing:0.12px;">&lt;*&gt; Строку 03 заполняют плательщики из числа коммерческих организаций, имеющие право на уплату платежей в бюджет</div>
<div class="t" style="left:223px;top:481px;font-size:12px;line-height:15px;color:#222;letter-spacing:0.12px;">государственного внебюджетного фонда социальной защиты населения Республики Беларусь ежеквартально, в отчете за январь - декабрь.</div>
<div class="t" style="left:245px;top:497px;font-size:12px;line-height:15px;color:#222;letter-spacing:0.12px;">&lt;*&gt; Строку 04 заполняют плательщики из числа организаций, имущество которых находится в собственности общественных объединений</div>
<div class="t" style="left:223px;top:512px;font-size:12px;line-height:15px;color:#222;letter-spacing:0.12px;">инвалидов, в отчете за январь - декабрь.</div>
<div class="t" style="left:336.0px;width:600px;text-align:center;top:528px;font-size:13px;line-height:15px;color:#222;">РАЗДЕЛ II</div>
<div class="t" style="left:336.0px;width:600px;text-align:center;top:544px;font-size:13px;line-height:15px;color:#222;">СВЕДЕНИЯ О ВЫПЛАТАХ</div>
<div class="t" style="left:850px;width:200px;text-align:right;top:560px;font-size:12px;line-height:15px;color:#222;">Таблица 2</div>
<div class="t" style="left:850px;width:200px;text-align:right;top:577px;font-size:12px;line-height:15px;color:#222;">рублей</div>
<div class="a" style="left:631px;top:723px;width:196px;height:16px;background:#FEFEE3"></div>
<div class="a" style="left:631px;top:740px;width:196px;height:16px;background:#FEFEE3"></div>
<div class="a" style="left:631px;top:757px;width:196px;height:16px;background:#FEFEE3"></div>
<div class="a" style="left:220px;top:591px;width:608px;height:1px;background:#333"></div>
<div class="a" style="left:220px;top:608px;width:608px;height:1px;background:#333"></div>
<div class="a" style="left:220px;top:622px;width:608px;height:1px;background:#333"></div>
<div class="a" style="left:220px;top:722px;width:608px;height:1px;background:#333"></div>
<div class="a" style="left:220px;top:739px;width:608px;height:1px;background:#333"></div>
<div class="a" style="left:220px;top:756px;width:608px;height:1px;background:#333"></div>
<div class="a" style="left:220px;top:773px;width:608px;height:1px;background:#333"></div>
<div class="a" style="left:220px;top:591px;width:1px;height:183px;background:#333"></div>
<div class="a" style="left:527px;top:591px;width:1px;height:183px;background:#333"></div>
<div class="a" style="left:630px;top:591px;width:1px;height:183px;background:#333"></div>
<div class="a" style="left:827px;top:591px;width:1px;height:183px;background:#333"></div>
<div class="t" style="left:220.5px;width:307px;text-align:center;top:593px;font-size:13px;line-height:15px;color:#222;">Наименование показателя</div>
<div class="t" style="left:527.5px;width:103px;text-align:center;top:593px;font-size:13px;line-height:15px;color:#222;">Код строки</div>
<div class="t" style="left:630.5px;width:197px;text-align:center;top:593px;font-size:13px;line-height:15px;color:#222;">С начала отчетного года</div>
<div class="t" style="left:344.0px;width:60px;text-align:center;top:611px;font-size:10px;line-height:11px;color:#222;">А</div>
<div class="t" style="left:549.0px;width:60px;text-align:center;top:611px;font-size:10px;line-height:11px;color:#222;">Б</div>
<div class="t" style="left:699.0px;width:60px;text-align:center;top:611px;font-size:10px;line-height:11px;color:#222;">1</div>
<div class="t" style="left:224px;top:643px;font-size:13px;line-height:15px;color:#222;">Общая начисленная сумма выплат в денежном</div>
<div class="t" style="left:224px;top:659px;font-size:13px;line-height:15px;color:#222;">и (или) натуральном выражении, включая</div>
<div class="t" style="left:224px;top:675px;font-size:13px;line-height:15px;color:#222;">вознаграждения по гражданско-правовым</div>
<div class="t" style="left:224px;top:691px;font-size:13px;line-height:15px;color:#222;">договорам, на которую начисляются</div>
<div class="t" style="left:224px;top:707px;font-size:13px;line-height:15px;color:#222;">обязательные страховые взносы, в том числе:</div>
<div class="t" style="left:529.0px;width:100px;text-align:center;top:665px;font-size:13px;line-height:15px;color:#222;">06</div>
<div class="t" style="left:240px;top:724px;font-size:13px;line-height:15px;color:#222;">инвалидам I и II групп</div>
<div class="t" style="left:529.0px;width:100px;text-align:center;top:724px;font-size:13px;line-height:15px;color:#222;">07</div>
<div class="t" style="left:679.0px;width:100px;text-align:center;top:724px;font-size:13px;line-height:15px;color:#222;">-</div>
<div class="t" style="left:240px;top:741px;font-size:13px;line-height:15px;color:#222;">инвалидам III группы</div>
<div class="t" style="left:529.0px;width:100px;text-align:center;top:741px;font-size:13px;line-height:15px;color:#222;">08</div>
<div class="t" style="left:679.0px;width:100px;text-align:center;top:741px;font-size:13px;line-height:15px;color:#222;">-</div>
<div class="t" style="left:240px;top:758px;font-size:13px;line-height:15px;color:#222;">участникам студенческих отрядов</div>
<div class="t" style="left:529.0px;width:100px;text-align:center;top:758px;font-size:13px;line-height:15px;color:#222;">09</div>
<div class="t" style="left:679.0px;width:100px;text-align:center;top:758px;font-size:13px;line-height:15px;color:#222;">-</div>
<div class="a" style="left:627px;top:619px;width:204px;height:108px;box-sizing:border-box;border:1px solid #F5A623;"></div>
<div class="a" style="left:628px;top:620px;width:202px;height:107px;box-sizing:border-box;border:4.5px solid #FF0000;background:#DEE5D6"></div>
<div class="t" style="left:654.0px;width:150px;text-align:center;top:665px;font-size:13px;line-height:15px;color:#222;">10 875,89</div>
<div class="t" style="left:336.0px;width:600px;text-align:center;top:792px;font-size:13px;line-height:15px;color:#222;">РАЗДЕЛ III</div>
<div class="t" style="left:184.0px;width:900px;text-align:center;top:809px;font-size:13px;line-height:15px;color:#222;letter-spacing:-0.045px;">СРЕДСТВА БЮДЖЕТА ГОСУДАРСТВЕННОГО ВНЕБЮДЖЕТНОГО ФОНДА СОЦИАЛЬНОЙ ЗАЩИТЫ НАСЕЛЕНИЯ РЕСПУБЛИКИ</div>
<div class="t" style="left:336.0px;width:600px;text-align:center;top:825px;font-size:13px;line-height:15px;color:#222;">БЕЛАРУСЬ</div>
<div class="t" style="left:850px;width:200px;text-align:right;top:843px;font-size:12px;line-height:15px;color:#222;">Таблица 3</div>
<div class="t" style="left:850px;width:200px;text-align:right;top:860px;font-size:12px;line-height:15px;color:#222;">рублей</div>
<div class="a" style="left:631px;top:906px;width:196px;height:48px;background:#E5EFDB"></div>
<div class="a" style="left:828px;top:906px;width:224px;height:48px;background:#C1DDC0"></div>
<div class="a" style="left:631px;top:955px;width:196px;height:48px;background:#E5EFDB"></div>
<div class="a" style="left:828px;top:955px;width:224px;height:48px;background:#C1DDC0"></div>
<div class="a" style="left:220px;top:874px;width:833px;height:1px;background:#333"></div>
<div class="a" style="left:220px;top:891px;width:833px;height:1px;background:#333"></div>
<div class="a" style="left:220px;top:905px;width:833px;height:1px;background:#333"></div>
<div class="a" style="left:220px;top:954px;width:833px;height:1px;background:#333"></div>
<div class="a" style="left:220px;top:1003px;width:833px;height:1px;background:#333"></div>
<div class="a" style="left:220px;top:874px;width:1px;height:130px;background:#333"></div>
<div class="a" style="left:527px;top:874px;width:1px;height:130px;background:#333"></div>
<div class="a" style="left:630px;top:874px;width:1px;height:130px;background:#333"></div>
<div class="a" style="left:827px;top:874px;width:1px;height:130px;background:#333"></div>
<div class="a" style="left:1052px;top:874px;width:1px;height:130px;background:#333"></div>
<div class="t" style="left:220.5px;width:307px;text-align:center;top:876px;font-size:13px;line-height:15px;color:#222;">Наименование показателя</div>
<div class="t" style="left:527.5px;width:103px;text-align:center;top:876px;font-size:13px;line-height:15px;color:#222;">Код строки</div>
<div class="t" style="left:630.5px;width:197px;text-align:center;top:876px;font-size:13px;line-height:15px;color:#222;">На начало отчетного года</div>
<div class="t" style="left:827.5px;width:225px;text-align:center;top:876px;font-size:13px;line-height:15px;color:#222;">На конец отчетного периода</div>
<div class="t" style="left:344.0px;width:60px;text-align:center;top:893px;font-size:10px;line-height:11px;color:#222;">А</div>
<div class="t" style="left:549.0px;width:60px;text-align:center;top:893px;font-size:10px;line-height:11px;color:#222;">Б</div>
<div class="t" style="left:699.0px;width:60px;text-align:center;top:893px;font-size:10px;line-height:11px;color:#222;">1</div>
<div class="t" style="left:910.0px;width:60px;text-align:center;top:893px;font-size:10px;line-height:11px;color:#222;">2</div>
<div class="t" style="left:224px;top:908px;font-size:13px;line-height:15px;color:#222;">Задолженность плательщика Фонду социальной</div>
<div class="t" style="left:224px;top:924px;font-size:13px;line-height:15px;color:#222;">защиты населения Министерства труда и</div>
<div class="t" style="left:224px;top:940px;font-size:13px;line-height:15px;color:#222;">социальной защиты Республики Беларусь</div>
<div class="t" style="left:529.0px;width:100px;text-align:center;top:923px;font-size:13px;line-height:15px;color:#222;">10</div>
<div class="t" style="left:654.0px;width:150px;text-align:center;top:923px;font-size:13px;line-height:15px;color:#222;">20 535,90</div>
<div class="t" style="left:865.0px;width:150px;text-align:center;top:923px;font-size:13px;line-height:15px;color:#222;">23 860,36</div>
<div class="t" style="left:224px;top:956px;font-size:13px;line-height:15px;color:#222;">Задолженность Фонда социальной защиты</div>
<div class="t" style="left:224px;top:972px;font-size:13px;line-height:15px;color:#222;">населения Министерства труда и социальной</div>
<div class="t" style="left:224px;top:988px;font-size:13px;line-height:15px;color:#222;">защиты Республики Беларусь плательщику</div>
<div class="t" style="left:529.0px;width:100px;text-align:center;top:972px;font-size:13px;line-height:15px;color:#222;">11</div>
<div class="t" style="left:679.0px;width:100px;text-align:center;top:972px;font-size:13px;line-height:15px;color:#222;">-</div>
<div class="t" style="left:890.0px;width:100px;text-align:center;top:972px;font-size:13px;line-height:15px;color:#222;">-</div>
</div></div>
<div class="a" style="left:1889px;top:199px;width:8px;height:768px;background:#D4D4D4;border-radius:4px"></div>
<div class="a" style="left:1889px;top:313px;width:8px;height:172px;background:#9A9A9A;border-radius:4px"></div>
<svg style="left:1890px;top:185px" width="7" height="4" viewBox="0 0 7 4"><path d="M0 4 L3.5 0 L7 4 Z" fill="#444"/></svg>
<svg style="left:1890px;top:975px" width="7" height="4" viewBox="0 0 7 4"><path d="M0 0 L3.5 4 L7 0 Z" fill="#444"/></svg>
<div class="a" style="left:223px;top:992px;width:1641px;height:8px;background:#D4D4D4;border-radius:4px"></div>
<div class="a" style="left:223px;top:992px;width:1549px;height:8px;background:#9A9A9A;border-radius:4px"></div>
<svg style="left:209px;top:993px" width="4" height="7" viewBox="0 0 4 7"><path d="M4 0 L0 3.5 L4 7 Z" fill="#C8C8C8"/></svg>
<svg style="left:1874px;top:993px" width="4" height="7" viewBox="0 0 4 7"><path d="M0 0 L4 3.5 L0 7 Z" fill="#444"/></svg>
<div class="t" style="left:1392px;top:956px;font-size:20px;line-height:23px;color:rgba(160,160,160,0.55);">Активация Windows</div>
<div class="t" style="left:1392px;top:981px;font-size:15px;line-height:17px;color:rgba(160,160,160,0.55);">Чтобы активировать Windows, перейдите в раздел "Параметры".</div>
</body></html>
